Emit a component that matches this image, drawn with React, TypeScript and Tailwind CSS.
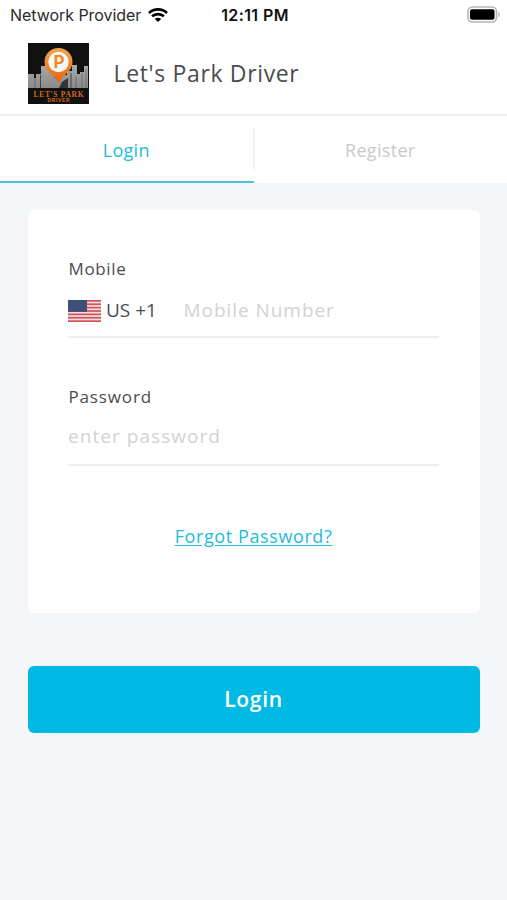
import React, { useState } from 'react';

const TABS = ['Login', 'Register'];

function StatusBar() {
  return (
    <div className="grid h-[30px] grid-cols-[1fr_auto_1fr] items-center bg-white pl-[10px] pr-[7px] font-['Inter',sans-serif] text-base leading-[30px] text-[#2b2b2b]">
      <div className="flex items-center gap-[7px] whitespace-nowrap">
        <span className="tracking-[-0.05px]">Network Provider</span>
        <svg width="20" height="14" viewBox="0 0 20 14" fill="none" stroke="#000" strokeWidth="2.7">
          <path d="M1 4.9C6 0.3 14 0.3 19 4.9" />
          <path d="M4.1 8.3C7.4 5.3 12.6 5.3 15.9 8.3" />
          <path d="M10 14L6.8 10.9C8.6 9.3 11.4 9.3 13.2 10.9Z" fill="#000" stroke="none" />
        </svg>
      </div>
      <span className="font-semibold tracking-[0.4px] text-[#111]">12:11 PM</span>
      <svg className="justify-self-end" width="33" height="18" viewBox="0 0 33 18">
        <rect x="1" y="1" width="28.5" height="15" rx="4.5" fill="#fff" stroke="#b5b5b5" strokeWidth="1.6" />
        <rect x="3" y="3.2" width="24.5" height="10.6" rx="2" fill="#000" />
        <path d="M31.3 6v5c2-.6 2-4.4 0-5z" fill="#b5b5b5" />
      </svg>
    </div>
  );
}

function Logo() {
  return (
    <svg width="61" height="61" viewBox="0 0 61 61">
      <defs>
        <linearGradient id="pin" x1="0" y1="0" x2="0" y2="1">
          <stop offset="0" stopColor="#f6a44e" />
          <stop offset="1" stopColor="#e5650c" />
        </linearGradient>
        <linearGradient id="city" x1="0" y1="0" x2="0" y2="1">
          <stop offset="0" stopColor="#a8a8a8" />
          <stop offset="1" stopColor="#8a8a8a" />
        </linearGradient>
      </defs>
      <rect width="61" height="61" fill="#111" />
      <path
        d="M0 45V31h6v4h2v-4h5V23h10l3 4v8h6v-3h7V28h5v-6h5v9h3v-2h4V23h4v22z"
        fill="url(#city)"
      />
      <path d="M7 35v10M48 34v11M54 30v15M58 26v19" stroke="#666" strokeWidth="0.8" />
      <path d="M12.5 32v13M43 30v15" stroke="#444" />
      <path d="M31 45l3-6 6-4v10z" fill="#333" />
      <path d="M30.5 40C26.5 32 16.5 28.500 16.5 19a14 14 0 0 1 28 0c0 9.500-10 13-14 21z" fill="url(#pin)" />
      <circle cx="30.5" cy="19" r="10.2" fill="#f7f7f7" />
      <text x="31" y="25" textAnchor="middle" fontFamily="Inter, sans-serif" fontWeight="700" fontSize="17" fill="#f08a1d">
        P
      </text>
      <text x="30.5" y="53.5" textAnchor="middle" fontFamily="Liberation Serif, serif" fontWeight="700" fontSize="7.5" textLength="50" fill="#d56a20">
        LET'S PARK
      </text>
      <text x="30.5" y="59.2" textAnchor="middle" fontFamily="Liberation Sans, sans-serif" fontWeight="700" fontSize="5" textLength="22" fill="#d56a20">
        DRIVER
      </text>
    </svg>
  );
}

function UsFlag() {
  return (
    <svg width="33" height="22" viewBox="0 0 33 22">
      <rect width="33" height="22" fill="#f3dfe1" />
      {[0, 1, 2, 3, 4, 5, 6].map((i) => (
        <rect key={i} y={i * 3.385} width="33" height="1.69" fill="#d3535c" />
      ))}
      <rect width="19" height="11.85" fill="#3f5078" />
    </svg>
  );
}

export default function App() {
  const [activeTab, setActiveTab] = useState('Login');
  const [mobile, setMobile] = useState('');
  const [password, setPassword] = useState('');

  return (
    <div className="flex h-[900px] w-[507px] flex-col overflow-hidden bg-[#f4f6fa] font-['Open_Sans',sans-serif] text-[#4b4c51]">
      <StatusBar />

      <header className="flex h-[86px] items-center gap-[24.5px] border-b-2 border-[#f0f0f0] bg-white pl-7 pt-[2px]">
        <Logo />
        <h1 className="text-[23px] leading-8 tracking-[0.65px]">Let's Park Driver</h1>
      </header>

      <nav className="flex h-[67px] bg-white">
        {TABS.map((tab) => (
          <button
            key={tab}
            onClick={() => setActiveTab(tab)}
            className={`flex flex-1 items-center border-b-2 text-lg ${
              tab === activeTab ? 'border-[#4cc4df] text-[#25bbdc]' : 'border-transparent text-[#c9c9c9]'
            }`}
          >
            <span className="flex-1 pt-[2px] tracking-[0.3px]">{tab}</span>
            {tab === 'Login' && <span className="-mr-px h-[41px] w-[2px] bg-[#f0f0f0]" />}
          </button>
        ))}
      </nav>

      <main className="px-7 pt-[27px] pr-[27px]">
        <div className="flex h-[403px] flex-col rounded-md bg-white pl-10 pr-[41px] pt-[47px]">
          <label className="pl-[0.5px] text-[17px] leading-6 tracking-[0.65px]">Mobile</label>
          <div className="mt-[9px] flex h-[48px] items-center border-b-2 border-[#eeeeee] pb-[4px] text-[19px]">
            <UsFlag />
            <span className="ml-[5px] w-[77.5px] whitespace-nowrap pb-[2px]">US +1</span>
            <input
              value={mobile}
              onChange={(e) => setMobile(e.target.value)}
              placeholder="Mobile Number"
              className="min-w-0 flex-1 pb-[2px] tracking-[0.95px] outline-none placeholder:text-[#d2d2d2]"
            />
          </div>

          <label className="mt-[47px] pl-[0.5px] text-[17px] leading-6 tracking-[0.85px]">Password</label>
          <input
            type="password"
            value={password}
            onChange={(e) => setPassword(e.target.value)}
            placeholder="enter password"
            className="mt-[9px] h-[48px] border-b-2 border-[#eeeeee] pb-[11px] text-[19px] tracking-[1.05px] outline-none placeholder:text-[#d2d2d2]"
          />

          <a className="mt-[56px] cursor-pointer self-center text-lg tracking-[0.6px] text-[#25bbdc] underline underline-offset-2">
            Forgot Password?
          </a>
        </div>

        <button className="mt-[53px] h-[67px] w-full rounded-md bg-[#00bae4] pr-px text-[21px] font-semibold tracking-[0.7px] text-white">
          Login
        </button>
      </main>
    </div>
  );
}
